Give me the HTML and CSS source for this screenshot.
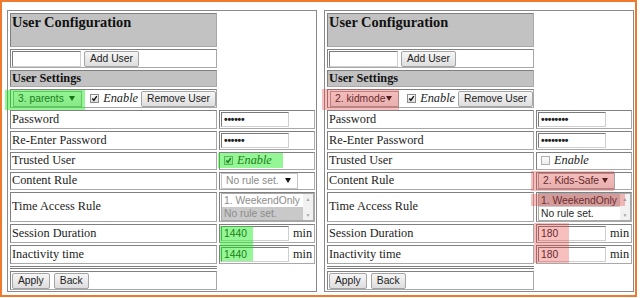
FILE: index.html
```html
<!DOCTYPE html>
<html lang="en">
<head>
  <meta charset="UTF-8">
  <title>User Configuration</title>
  <link rel="stylesheet" href="styles.css">
</head>
<body>
<div class="frame">

  <div class="panel">
    <div class="cell head">User Configuration</div>
    <div class="cell tools">
      <span class="field name"></span>
      <button class="btn">Add User</button>
    </div>
    <div class="cell sub">User Settings</div>
    <div class="cell tools">
      <span class="select user">3. parents<b></b></span>
      <span class="check"><svg viewBox="0 0 7 7"><path d="M1.3 3.6 L2.9 5.3 L5.8 1.2"/></svg></span>
      <em>Enable</em>
      <button class="btn">Remove User</button>
    </div>

    <div class="cell label">Password</div>
    <div class="cell value"><span class="field pw">••••••</span></div>
    <div class="cell label">Re-Enter Password</div>
    <div class="cell value"><span class="field pw">••••••</span></div>
    <div class="cell label">Trusted User</div>
    <div class="cell value">
      <span class="check"><svg viewBox="0 0 7 7"><path d="M1.3 3.6 L2.9 5.3 L5.8 1.2"/></svg></span>
      <em>Enable</em>
    </div>
    <div class="cell label">Content Rule</div>
    <div class="cell value"><span class="select rule off">No rule set.<b></b></span></div>
    <div class="cell label">Time Access Rule</div>
    <div class="cell value">
      <div class="list off">
        <div class="opts"><span>1. WeekendOnly</span><span class="sel">No rule set.</span></div>
        <div class="bar"><i>▲</i><i>▼</i></div>
      </div>
    </div>
    <div class="cell label">Session Duration</div>
    <div class="cell value"><span class="field num">1440</span><span class="unit">min</span></div>
    <div class="cell label">Inactivity time</div>
    <div class="cell value"><span class="field num">1440</span><span class="unit">min</span></div>
    <div class="rule"></div>
    <div class="cell tools">
      <button class="btn">Apply</button>
      <button class="btn">Back</button>
    </div>
  </div>

  <div class="panel">
    <div class="cell head">User Configuration</div>
    <div class="cell tools">
      <span class="field name"></span>
      <button class="btn">Add User</button>
    </div>
    <div class="cell sub">User Settings</div>
    <div class="cell tools">
      <span class="select user">2. kidmode<b></b></span>
      <span class="check"><svg viewBox="0 0 7 7"><path d="M1.3 3.6 L2.9 5.3 L5.8 1.2"/></svg></span>
      <em>Enable</em>
      <button class="btn">Remove User</button>
    </div>

    <div class="cell label">Password</div>
    <div class="cell value"><span class="field pw">••••••••</span></div>
    <div class="cell label">Re-Enter Password</div>
    <div class="cell value"><span class="field pw">••••••••</span></div>
    <div class="cell label">Trusted User</div>
    <div class="cell value">
      <span class="check empty"></span>
      <em>Enable</em>
    </div>
    <div class="cell label">Content Rule</div>
    <div class="cell value"><span class="select rule">2. Kids-Safe<b></b></span></div>
    <div class="cell label">Time Access Rule</div>
    <div class="cell value">
      <div class="list">
        <div class="opts"><span class="sel">1. WeekendOnly</span><span>No rule set.</span></div>
        <div class="bar"><i>▲</i><i>▼</i></div>
      </div>
    </div>
    <div class="cell label">Session Duration</div>
    <div class="cell value"><span class="field num">180</span><span class="unit">min</span></div>
    <div class="cell label">Inactivity time</div>
    <div class="cell value"><span class="field num">180</span><span class="unit">min</span></div>
    <div class="rule"></div>
    <div class="cell tools">
      <button class="btn">Apply</button>
      <button class="btn">Back</button>
    </div>
  </div>

  <!-- highlight marks drawn over the screenshot -->
  <div class="mark green hl-user"></div>
  <div class="mark green hl-trusted"></div>
  <div class="mark green hl-time"></div>
  <div class="mark red hl-kid"></div>
  <div class="mark red hl-rule"></div>
  <div class="mark red hl-week"></div>
  <div class="mark red hl-min"></div>
</div>
</body>
</html>
```

FILE: styles.css
```css
body {
  margin: 0;
  background: #fff;
  font-family: "Liberation Serif", "Times New Roman", serif;
  font-size: 12.3px;
  color: #1c1c1c;
}
.frame {
  position: relative;
  width: 637px;
  height: 297px;
  box-sizing: border-box;
  border: 2px solid #ee7a2d;
  padding: 8px 1px 3px 5px;
  display: flex;
  gap: 7px;
}
.panel {
  width: 310px;
  box-sizing: border-box;
  border: 1px solid #8a8a8a;
  padding: 2px 1px 1px 2px;
  display: grid;
  grid-template-columns: 207px 96px;
  grid-template-rows: 34px 19px 17px 19px 19px 18.5px 18px 18px 30.5px 19px 19px 3px 19px;
  gap: 2px;
}
.cell {
  grid-column: 1;
  box-sizing: border-box;
  border: 1px solid;
  border-color: #808080 #a8a8a8 #a8a8a8 #808080;
  display: flex;
  align-items: center;
  padding-left: 1px;
}
.cell.value {
  grid-column: 2;
}
.head {
  align-items: flex-start;
  background: #c2c2c2;
  font-size: 14.4px;
  font-weight: bold;
  color: #111;
  line-height: 16px;
}
.sub {
  background: #c2c2c2;
  font-weight: bold;
  color: #111;
}
.tools {
  gap: 3px;
}
.rule {
  grid-column: 1;
  border-top: 1px solid #7c7c7c;
  border-bottom: 1px solid #7c7c7c;
}
em {
  font-style: italic;
  color: #222;
}

/* form controls */
.btn {
  height: 16px;
  box-sizing: border-box;
  margin: 0;
  padding: 0 5px;
  border: 1px solid #a4a4a4;
  border-radius: 2px;
  background: linear-gradient(#f6f6f6, #dedede);
  font-family: "Liberation Sans", Arial, sans-serif;
  font-size: 10.3px;
  color: #222;
  white-space: nowrap;
}
.tools .btn + .btn {
  margin-left: 1px;
}
.field {
  width: 68px;
  height: 15px;
  box-sizing: border-box;
  border: 1px solid;
  border-color: #7a7a7a #cfcfcf #cfcfcf #7a7a7a;
  background: #fff;
  padding: 0 2px;
  font-family: "Liberation Sans", Arial, sans-serif;
  font-size: 10.3px;
  line-height: 13px;
  color: #222;
}
.field.name {
  width: 69px;
  height: 16px;
}
.field.pw {
  font-weight: bold;
  letter-spacing: -0.2px;
}
.unit {
  margin-left: 4px;
}
.select {
  height: 16px;
  box-sizing: border-box;
  border: 1px solid #a4a4a4;
  background: linear-gradient(#fbfbfb, #e9e9e9);
  display: flex;
  align-items: center;
  justify-content: space-between;
  padding: 0 6px 0 4px;
  font-family: "Liberation Sans", Arial, sans-serif;
  font-size: 10.3px;
  color: #222;
  white-space: nowrap;
}
.select b {
  width: 0;
  height: 0;
  border-left: 3px solid transparent;
  border-right: 3px solid transparent;
  border-top: 5px solid #111;
}
.select.user {
  width: 71px;
  margin-left: 1px;
}
.select.rule {
  width: 77px;
}
.select.off {
  background: #fff;
  border-color: #c4c4c4;
  color: #8a8a8a;
}
.check {
  width: 7px;
  height: 7px;
  margin-left: 5px;
  margin-right: 1px;
  border: 1px solid #8c8c8c;
  background: linear-gradient(#fdfdfd, #dcdcdc);
  display: flex;
}
.cell.value .check {
  margin-left: 3px;
  margin-right: 4px;
}
.check svg {
  width: 7px;
  height: 7px;
  fill: none;
  stroke: #111;
  stroke-width: 1.4;
}
.check.empty {
  background: linear-gradient(#fdfdfd, #ececec);
  border-color: #b0b0b0;
}
.list {
  width: 93px;
  height: 28px;
  box-sizing: border-box;
  border: 1px solid #a9a9a9;
  background: #fff;
  display: flex;
  font-family: "Liberation Sans", Arial, sans-serif;
  font-size: 10.3px;
  color: #2a2a2a;
}
.list.off {
  color: #8c8c8c;
}
.opts {
  flex: 1;
  display: flex;
  flex-direction: column;
}
.opts span {
  height: 13px;
  line-height: 13px;
  padding-left: 2px;
  white-space: nowrap;
}
.opts .sel {
  background: #c9c9c9;
}
.bar {
  width: 10px;
  background: #f1f1f1;
  display: flex;
  flex-direction: column;
  justify-content: space-between;
  align-items: center;
  padding: 2px 0;
  font-size: 5px;
  color: #a6a6a6;
}
.bar i {
  font-style: normal;
}

/* coloured marks */
.mark {
  position: absolute;
}
.green {
  background: rgba(20, 235, 20, 0.45);
}
.red {
  background: rgba(235, 60, 60, 0.33);
}
.hl-user {
  left: 3px;
  top: 88px;
  width: 80px;
  height: 20px;
}
.hl-trusted {
  left: 216px;
  top: 151px;
  width: 65px;
  height: 15px;
}
.hl-time {
  left: 218px;
  top: 224px;
  width: 33px;
  height: 35px;
}
.hl-kid {
  left: 320px;
  top: 87px;
  width: 77px;
  height: 21px;
}
.hl-rule {
  left: 529px;
  top: 169px;
  width: 83px;
  height: 20px;
}
.hl-week {
  left: 529px;
  top: 192px;
  width: 94px;
  height: 12px;
}
.hl-min {
  left: 532px;
  top: 221px;
  width: 35px;
  height: 40px;
}
```
